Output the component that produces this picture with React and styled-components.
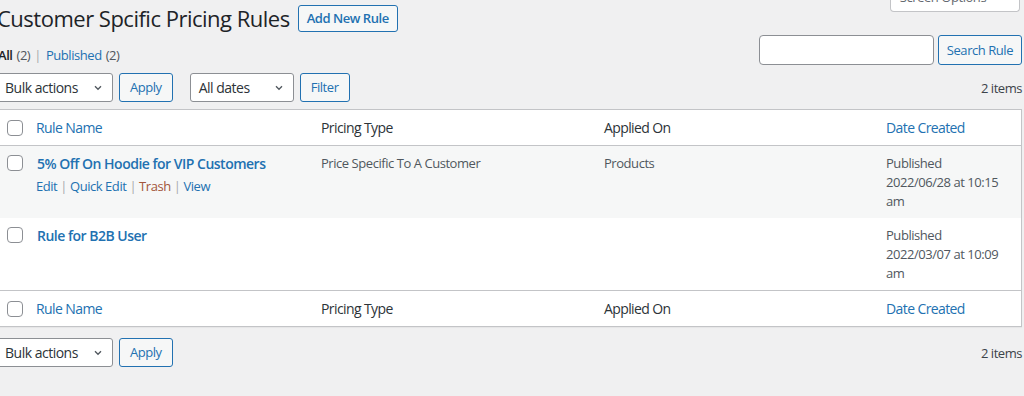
import React from "react";
import styled, { createGlobalStyle } from "styled-components";

const Global = createGlobalStyle`
  html, body { margin: 0; padding: 0; }
  body {
    background: #f0f0f1;
    font-family: "Open Sans", "Noto Sans", sans-serif;
    font-size: 13px;
    letter-spacing: -0.45px;
    color: #3c434a;
    overflow: hidden;
  }
`;

const Wrap = styled.div`
  width: 1023px;
  margin-left: -1px;
  display: flex;
  flex-direction: column;
`;

const HeaderRow = styled.div`
  display: flex;
  align-items: flex-start;
  padding-top: 5px;
  height: 27px;
`;

const Title = styled.h1`
  margin: 0 8px 0 -2px;
  font-size: 22px;
  letter-spacing: -0.5px;
  font-weight: 400;
  line-height: 27px;
  color: #1d2327;
  white-space: nowrap;
`;

const OutlineButton = styled.button`
  font-family: inherit;
  font-size: 13px;
  letter-spacing: -0.45px;
  font-weight: ${(p) => (p.$strong ? 600 : 400)};
  height: ${(p) => p.$h || 29}px;
  padding: 0 ${(p) => p.$px || 10}px;
  border: 1px solid #2271b1;
  border-radius: 3px;
  background: #f6f7f7;
  color: #2271b1;
  white-space: nowrap;
  cursor: pointer;
  line-height: 1;
`;

const ScreenOptions = styled.button`
  margin: -21px 2px 0 auto;
  height: 28px;
  width: 130px;
  padding: 0 14px 2px 6px;
  border: 1px solid #c3c4c7;
  border-top: none;
  border-radius: 0 0 4px 4px;
  background: #fff;
  color: #646970;
  font-family: inherit;
  font-size: 13px;
  letter-spacing: -0.45px;
  white-space: nowrap;
  display: flex;
  align-items: center;
  justify-content: center;
  gap: 8px;
`;

const FilterRow = styled.div`
  display: flex;
  align-items: flex-start;
  justify-content: space-between;
  margin-top: 3px;
`;

const SubSub = styled.ul`
  list-style: none;
  margin: 11px 0 0 -1px;
  padding: 0;
  display: flex;
  line-height: 19px;
  color: #646970;
`;

const SubItem = styled.li`
  display: flex;
  gap: 4px;
`;

const Sep = styled.span`
  color: #a7aaad;
  margin: 0 5px 0 4px;
`;

const SubLink = styled.span`
  color: ${(p) => (p.$current ? "#1d2327" : "#2271b1")};
  font-weight: ${(p) => (p.$current ? 600 : 400)};
`;

const Count = styled.span`
  color: #50575e;
`;

const SearchBox = styled.div`
  display: flex;
  gap: 4px;
`;

const SearchInput = styled.input`
  width: 175px;
  height: 30px;
  box-sizing: border-box;
  border: 1px solid #8c8f94;
  border-radius: 4px;
  background: #fff;
  font-family: inherit;
  font-size: 13px;
  padding: 0 8px;
`;

const TableNav = styled.div`
  display: flex;
  align-items: center;
  height: 29px;
  margin: ${(p) => p.$margin};
`;

const Group = styled.div`
  display: flex;
  align-items: center;
  gap: 6px;
  margin-right: 17px;
  &:first-child {
    margin-left: -3px;
  }
`;

const Select = styled.div`
  box-sizing: border-box;
  height: 29px;
  width: ${(p) => p.$w}px;
  border: 1px solid #8c8f94;
  border-radius: 3px;
  background: #fff;
  color: #2c3338;
  display: flex;
  align-items: center;
  justify-content: space-between;
  padding: 0 8px 0 8px;
  font-size: 14px;
  letter-spacing: -0.5px;
`;

const Items = styled.span`
  margin-left: auto;
  color: #3c434a;
`;

const Table = styled.table`
  width: 1023px;
  border-collapse: separate;
  border-spacing: 0;
  table-layout: fixed;
  background: #fff;
  border: 1px solid #c3c4c7;
  box-shadow: 0 1px 1px rgba(0, 0, 0, 0.04);
`;

const Th = styled.th`
  text-align: left;
  font-weight: 400;
  font-size: 14px;
  letter-spacing: -0.6px;
  line-height: 19px;
  padding: 8px 10px;
  color: ${(p) => (p.$sortable ? "#2271b1" : "#2c3338")};
  border-bottom: ${(p) => (p.$foot ? "none" : "1px solid #c3c4c7")};
  border-top: ${(p) => (p.$foot ? "1px solid #c3c4c7" : "none")};
  vertical-align: middle;
`;

const CheckTh = styled(Th)`
  padding: 0 0 0 7px;
`;

const Tr = styled.tr`
  background: ${(p) => (p.$alt ? "#f6f7f7" : "#fff")};
`;

const Td = styled.td`
  padding: 8px 10px 7px;
  vertical-align: top;
  line-height: 19px;
  font-size: 13px;
  color: #50575e;
`;

const CheckTd = styled(Td)`
  padding: 9px 0 0 7px;
`;

const Box = styled.span`
  display: block;
  width: 16px;
  height: 16px;
  box-sizing: border-box;
  border: 1px solid #8c8f94;
  border-radius: 4px;
  background: #fff;
`;

const RowTitle = styled.a`
  display: block;
  color: #2271b1;
  font-weight: 600;
  font-size: 14px;
  letter-spacing: -0.5px;
  line-height: 19px;
  padding-left: 1px;
  text-decoration: none;
`;

const RowActions = styled.div`
  padding-top: 4px;
  display: flex;
  color: #a7aaad;
  line-height: 19px;
`;

const Action = styled.span`
  color: ${(p) => (p.$danger ? "#a3553a" : "#2271b1")};
`;

const ActSep = styled.span`
  margin: 0 3px;
`;

const Chevron = () => (
  <svg width="12" height="12" viewBox="0 0 20 20" aria-hidden="true">
    <path d="M5 7l5 5 5-5" fill="none" stroke="#50575e" strokeWidth="2.2" />
  </svg>
);

const SmallCaret = () => (
  <svg width="8" height="8" viewBox="0 0 20 20" aria-hidden="true">
    <path d="M4 7l6 6 6-6z" fill="#8c8f94" />
  </svg>
);

const Check = () => <Box />;

const columns = [
  { label: "Rule Name", sortable: true },
  { label: "Pricing Type" },
  { label: "Applied On" },
  { label: "Date Created", sortable: true },
];

const rows = [
  {
    title: "5% Off On Hoodie for VIP Customers",
    type: "Price Specific To A Customer",
    applied: "Products",
    date: ["Published", "2022/06/28 at 10:15", "am"],
    actions: true,
  },
  {
    title: "Rule for B2B User",
    type: "",
    applied: "",
    date: ["Published", "2022/03/07 at 10:09", "am"],
  },
];

const HeadRow = ({ foot }) => (
  <tr>
    <CheckTh $foot={foot}>
      <Check />
    </CheckTh>
    {columns.map((c) => (
      <Th key={c.label} $sortable={c.sortable} $foot={foot}>
        {c.label}
      </Th>
    ))}
  </tr>
);

const BulkNav = ({ margin, filters }) => (
  <TableNav $margin={margin}>
    <Group>
      <Select $w={117}>
        Bulk actions <Chevron />
      </Select>
      <OutlineButton>Apply</OutlineButton>
    </Group>
    {filters && (
      <Group>
        <Select $w={104}>
          All dates <Chevron />
        </Select>
        <OutlineButton>Filter</OutlineButton>
      </Group>
    )}
    <Items>2 items</Items>
  </TableNav>
);

export default function App() {
  return (
    <>
      <Global />
      <Wrap>
        <HeaderRow>
          <Title>Customer Spcific Pricing Rules</Title>
          <OutlineButton $strong $h={27} $px={8}>
            Add New Rule
          </OutlineButton>
          <ScreenOptions>
            Screen Options <SmallCaret />
          </ScreenOptions>
        </HeaderRow>

        <FilterRow>
          <SubSub>
            <SubItem>
              <SubLink $current>All</SubLink>
              <Count>(2)</Count>
            </SubItem>
            <Sep>|</Sep>
            <SubItem>
              <SubLink>Published</SubLink>
              <Count>(2)</Count>
            </SubItem>
          </SubSub>
          <SearchBox>
            <SearchInput type="search" />
            <OutlineButton $h={30} $px={8}>
              Search Rule
            </OutlineButton>
          </SearchBox>
        </FilterRow>

        <BulkNav margin="8px 0 7px" filters />

        <Table>
          <colgroup>
            <col style={{ width: "26px" }} />
            <col style={{ width: "285px" }} />
            <col style={{ width: "283px" }} />
            <col style={{ width: "282px" }} />
            <col />
          </colgroup>
          <thead>
            <HeadRow />
          </thead>
          <tbody>
            {rows.map((r, i) => (
              <Tr key={r.title} $alt={i % 2 === 0}>
                <CheckTd>
                  <Check />
                </CheckTd>
                <Td>
                  <RowTitle>{r.title}</RowTitle>
                  {r.actions && (
                    <RowActions>
                      <Action>Edit</Action>
                      <ActSep>|</ActSep>
                      <Action>Quick Edit</Action>
                      <ActSep>|</ActSep>
                      <Action $danger>Trash</Action>
                      <ActSep>|</ActSep>
                      <Action>View</Action>
                    </RowActions>
                  )}
                </Td>
                <Td>{r.type}</Td>
                <Td>{r.applied}</Td>
                <Td>
                  {r.date.map((d) => (
                    <div key={d}>{d}</div>
                  ))}
                </Td>
              </Tr>
            ))}
          </tbody>
          <tfoot>
            <HeadRow foot />
          </tfoot>
        </Table>

        <BulkNav margin="11px 0 0" />
      </Wrap>
    </>
  );
}
